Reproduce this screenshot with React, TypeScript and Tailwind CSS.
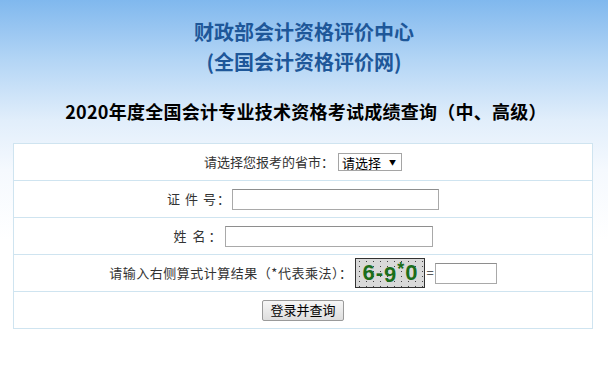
import React from "react";

const cjk = { fontFamily: '"Microsoft YaHei", "Noto Sans CJK SC", "Noto Sans", sans-serif' };

function Row({ children, last }: { children: React.ReactNode; last?: boolean }) {
  return (
    <div
      className={`flex items-center justify-center text-[13px] text-[#333] ${
        last ? "h-[36px]" : "h-[37px] border-b border-[#cfe4f0]"
      }`}
    >
      {children}
    </div>
  );
}

export default function App() {
  return (
    <div
      className="w-[608px] h-[381px] overflow-hidden bg-[linear-gradient(to_bottom,#80b8ee_0px,#b3d5f5_60px,#e1eefb_120px,#f5f9fe_170px,#ffffff_240px)]"
      style={cjk}
    >
      <div className="pt-[17px] text-center">
        <div className="text-[20px] leading-[30px] font-bold text-[#1e5799]">财政部会计资格评价中心</div>
        <div className="text-[20px] leading-[30px] font-bold text-[#1e5799]">(全国会计资格评价网)</div>
        <div className="mt-[22px] pl-[4px] text-[18px] leading-[24px] font-bold text-black tracking-[0.25px]">
          2020年度全国会计专业技术资格考试成绩查询（中、高级）
        </div>
      </div>
      <div className="mt-[20px] ml-[13px] w-[580px] border border-[#cfe4f0] bg-white">
        <Row>
          <span>请选择您报考的省市：</span>
          <div className="ml-[4px] w-[64px] h-[18px] border border-[#a5a5a5] bg-white flex items-center justify-between pl-[3px] pr-[5px] text-[13px] text-black leading-none">
            <span>请选择</span>
            <span className="text-[7px]">▼</span>
          </div>
        </Row>
        <Row>
          <span className="flex">
            <span className="w-[18px]">证</span>
            <span className="w-[18px]">件</span>
            <span className="w-[14px]">号</span>
            <span className="w-[15px]">：</span>
          </span>
          <div className="w-[207px] h-[21px] border border-[#a9a9a9] border-t-[#8e8e8e] bg-white" />
        </Row>
        <Row>
          <span className="flex">
            <span className="w-[19px]">姓</span>
            <span className="w-[16px]">名</span>
            <span className="w-[16px]">：</span>
          </span>
          <div className="w-[208px] h-[21px] border border-[#a9a9a9] border-t-[#8e8e8e] bg-white" />
        </Row>
        <Row>
          <span className="tracking-[0.5px]">请输入右侧算式计算结果（*代表乘法）：</span>
          <div className="ml-[3px] w-[70px] h-[30px] border border-[#333] bg-[#d9d9d9] bg-[radial-gradient(#444_0.5px,transparent_0.7px)] bg-[length:7px_5px] flex items-center justify-center">
            <span
              className="text-[22px] font-bold text-[#1b6e1b] leading-none tracking-[1px] flex items-end"
              style={{ fontFamily: '"Liberation Sans", Arial, sans-serif' }}
            >
              <span>6</span>
              <span>-</span>
              <span className="-mb-[2px]">9</span>
              <span className="-translate-y-[6px] text-[18px]">*</span>
              <span>0</span>
            </span>
          </div>
          <span className="mx-[1px] text-[13px]">=</span>
          <div className="w-[62px] h-[21px] border border-[#a9a9a9] border-t-[#8e8e8e] bg-white" />
        </Row>
        <Row last>
          <div className="w-[82px] h-[21px] border border-[#9a9a9a] rounded-[2px] bg-[linear-gradient(to_bottom,#f6f6f6,#dedede)] flex items-center justify-center text-[13px] text-black">
            登录并查询
          </div>
        </Row>
      </div>
    </div>
  );
}
